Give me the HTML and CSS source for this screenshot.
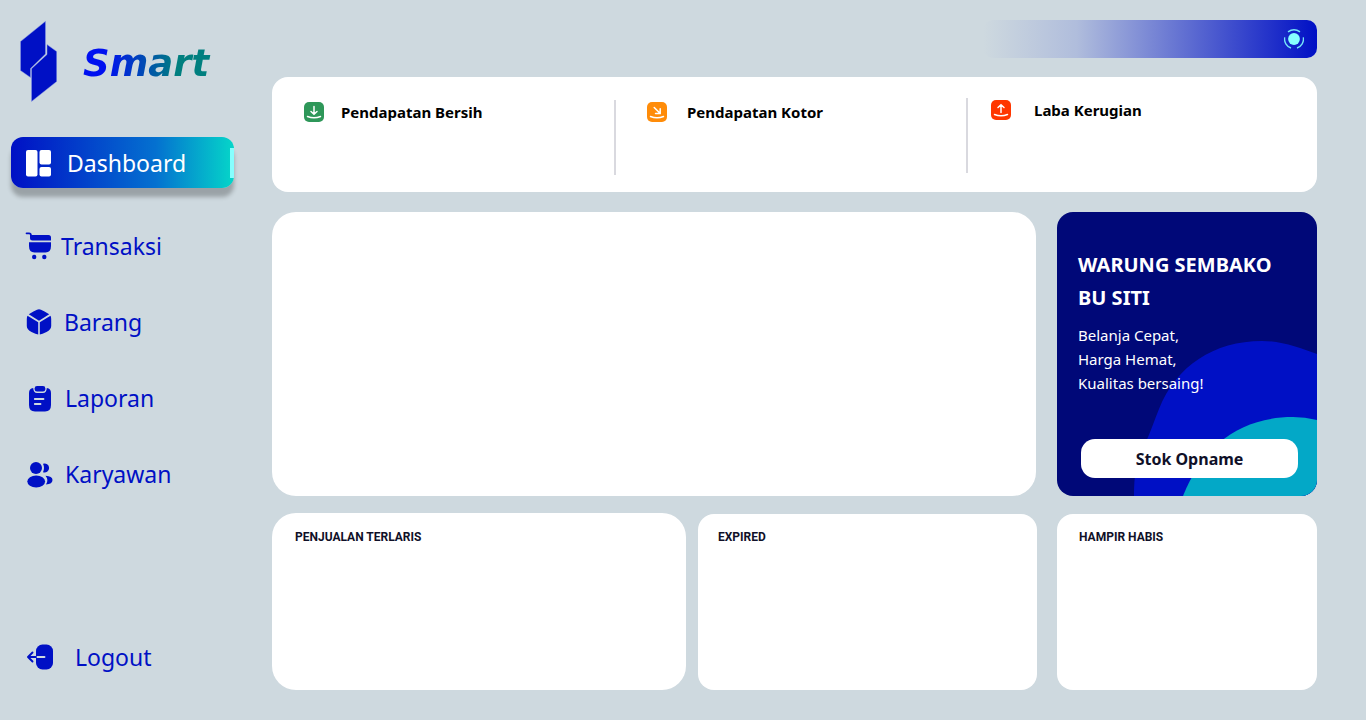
FILE: index.html
```html
<!DOCTYPE html>
<html lang="id">
<head>
<meta charset="utf-8">
<meta name="viewport" content="width=device-width, initial-scale=1">
<title>Smart</title>
<link rel="stylesheet" href="styles.css">
</head>
<body>
<div class="app">
  <aside class="sidebar">
    <div class="brand">
      <svg class="brand-mark" viewBox="0 0 37 82" aria-hidden="true">
        <g fill="#0010c5" stroke="#8f9fe6" stroke-width=".5">
          <path d="M.5 21.500 25.500 1.300V34L10.500 48.500V57.500L.5 50.500Z"/>
          <path d="M27 24.500 36.700 31.500V61.500L11.500 81.500V48.700L27 34.500Z"/>
        </g>
      </svg>
      <span class="brand-name">Smart</span>
    </div>
    <nav class="nav">
      <a class="nav-item active" href="#dashboard">
        <svg class="nav-icon" viewBox="0 0 26 28" aria-hidden="true"><g fill="#fff"><rect x="0" y="1" width="11.500" height="26.500" rx="2"/><rect x="13.500" y="1" width="11.500" height="14.500" rx="2"/><rect x="13.500" y="18" width="11.500" height="9.500" rx="2"/></g></svg>
        <span>Dashboard</span>
      </a>
      <a class="nav-item cart" href="#transaksi">
        <svg class="nav-icon" viewBox="0 0 26 28" aria-hidden="true"><path d="M.5 1.300H3Q5 1.300 5 3.500V5" fill="none" stroke="currentColor" stroke-width="1.700" stroke-linecap="round"/><path d="M4 3H22.500Q25 3 25 5.500V8.500H6.500Q4 8.500 4 6ZM3 10.200H25V14Q25 20.500 19.500 20.500H8.500Q3 20.500 3 14Z" fill="currentColor"/><circle cx="8.200" cy="25" r="2.200" fill="currentColor"/><circle cx="18.300" cy="25" r="2.200" fill="currentColor"/></svg>
        <span>Transaksi</span>
      </a>
      <a class="nav-item box" href="#barang">
        <svg class="nav-icon" viewBox="0 0 26 28" aria-hidden="true"><path d="M2.800 6.200Q8 3 11 1.700Q13 .9 15 1.700Q18 3 23.200 6.200L13 12.800ZM1.500 7.800 12.200 14.200V26.500Q10 26.300 5.500 24Q.8 21.500.8 18V11Q.8 9 1.500 7.800ZM24.500 7.800 13.800 14.200V26.500Q16 26.300 20.500 24Q25.200 21.500 25.200 18V11Q25.200 9 24.500 7.800Z" fill="currentColor"/></svg>
        <span>Barang</span>
      </a>
      <a class="nav-item" href="#laporan">
        <svg class="nav-icon" viewBox="0 0 26 28" aria-hidden="true"><path d="M7.200 4Q3 4.500 3 9V21Q3 27.500 9 27.500H19Q25 27.500 25 21V9Q25 4.500 20.800 4Q20.500 9 17 9H11Q7.500 9 7.200 4Z" fill="currentColor"/><rect x="8.700" y="2" width="10.600" height="5.500" rx="2.300" fill="currentColor"/><path d="M8.800 15H17.500M8.800 20H14.500" stroke="#ced9df" stroke-width="1.800" stroke-linecap="round"/></svg>
        <span>Laporan</span>
      </a>
      <a class="nav-item" href="#karyawan">
        <svg class="nav-icon" viewBox="0 0 26 28" aria-hidden="true"><g fill="currentColor"><circle cx="10" cy="8" r="6"/><ellipse cx="10.200" cy="21.500" rx="8.900" ry="5.900"/><path d="M17 3.800A4.500 4.500 0 1 1 17 12.200Q19 8 17 3.800ZM19.500 15.800Q26.500 16.200 26.500 20Q26.500 24 20 24.500Q23 20 19.500 15.800Z"/></g></svg>
        <span>Karyawan</span>
      </a>
    </nav>
    <a class="nav-item logout" href="#logout">
      <svg class="nav-icon" viewBox="0 0 26 28" aria-hidden="true"><rect x="10" y="1.500" width="17" height="25" rx="6.500" fill="currentColor"/><path d="M18.500 14H10" stroke="#ced9df" stroke-width="1.900" stroke-linecap="round"/><path d="M10 14H2.500M6.500 9.500 2 14 6.500 18.500" fill="none" stroke="currentColor" stroke-width="1.900" stroke-linecap="round" stroke-linejoin="round"/></svg>
      <span>Logout</span>
    </a>
  </aside>

  <main class="main">
    <header class="topbar">
      <button class="status" type="button" aria-label="Status">
        <svg viewBox="0 0 20 20" aria-hidden="true"><circle cx="10" cy="10" r="5.900" fill="#87ffff"/><path d="M4 2.800Q10-1.200 16 2.800M.7 8.300A9.400 9.400 0 0 0 7 19M19.300 8.300A9.400 9.400 0 0 1 13 19" fill="none" stroke="#75e5f8" stroke-width="1.400"/></svg>
      </button>
    </header>

    <section class="card summary">
      <div class="metric">
        <svg class="metric-icon" viewBox="0 0 20 20" aria-hidden="true"><rect width="20" height="20" rx="5" fill="#2e9759"/><path d="M10 4.500V12M7 9.500 10 12.300 13 9.500M3.500 14.500Q10 17 16.500 14.500" class="arrow"/></svg>
        <h2>Pendapatan Bersih</h2>
      </div>
      <div class="metric gross">
        <svg class="metric-icon" viewBox="0 0 20 20" aria-hidden="true"><rect width="20" height="20" rx="5" fill="#ff8c09"/><path d="M7.200 5.500 13 11.300M8.500 11.500H13.200V6.800M3.500 14.500Q10 17 16.500 14.500" class="arrow"/></svg>
        <h2>Pendapatan Kotor</h2>
      </div>
      <div class="metric loss">
        <svg class="metric-icon" viewBox="0 0 20 20" aria-hidden="true"><rect width="20" height="20" rx="5" fill="#ff3700"/><path d="M10 12.500V5M7 7.500 10 4.700 13 7.500M3.500 14.500Q10 17 16.500 14.500" class="arrow"/></svg>
        <h2>Laba Kerugian</h2>
      </div>
    </section>

    <div class="row hero">
      <section class="card large" aria-label="Grafik"></section>
      <section class="promo">
        <svg class="promo-art" viewBox="0 0 260 284" preserveAspectRatio="xMaxYMax slice" aria-hidden="true"><path d="M77 284C77 265 79 246 88 232C94 219 97 209 102 197C119 154 157 129 205 129C225 129 243 136 260 142V284Z" fill="#0010c5"/><path d="M126 284C146 233 184 205 236 205Q248 205 260 208V284Z" fill="#03a8c7"/></svg>
        <div class="promo-body">
          <h1>WARUNG SEMBAKO<br>BU SITI</h1>
          <p>Belanja Cepat,<br>Harga Hemat,<br>Kualitas bersaing!</p>
          <button class="stock" type="button">Stok Opname</button>
        </div>
      </section>
    </div>

    <div class="row lists">
      <section class="card large list best"><h3>PENJUALAN TERLARIS</h3></section>
      <section class="card list expired"><h3>EXPIRED</h3></section>
      <section class="card list low"><h3>HAMPIR HABIS</h3></section>
    </div>
  </main>
</div>
</body>
</html>
```
FILE: styles.css
```css
* { box-sizing: border-box; }

body {
  margin: 0;
  background: #ced9df;
  color: #000;
  font-family: "Noto Sans", "Open Sans", sans-serif;
}

h1, h2, h3, p { margin: 0; }
button { border: 0; padding: 0; font: inherit; cursor: pointer; }
svg { display: block; flex: none; }

.app { display: flex; min-height: 100vh; }

.sidebar {
  display: flex;
  flex: none;
  flex-direction: column;
  width: 272px;
  padding: 20px 38px 37px 11px;
}

.brand { display: flex; align-items: center; gap: 26px; padding-left: 9px; }
.brand-mark { width: 37px; height: 82px; }
.brand-name {
  padding: 6px 4px 0 0;
  background: linear-gradient(90deg, #0010f0 18%, #007f7f 72%);
  background-clip: text;
  color: transparent;
  font-family: "DejaVu Sans", "Noto Sans", sans-serif;
  font-size: 37px;
  font-style: italic;
  font-weight: 700;
  line-height: 60px;
}

.nav { display: flex; flex-direction: column; gap: 24px; margin-top: 35px; }
.nav-item {
  display: flex;
  align-items: center;
  gap: 13px;
  height: 52px;
  padding-left: 15px;
  color: #0010c5;
  font-size: 23px;
  line-height: 36px;
  text-decoration: none;
}
.nav-icon { width: 26px; height: 28px; overflow: visible; }
.nav-item.active {
  gap: 15px;
  height: 51px;
  margin-bottom: 8px;
  border-radius: 12px;
  background:
    linear-gradient(#87ffff, #87ffff) right center / 4px 30px no-repeat,
    linear-gradient(90deg, #0010c5, #0471d0 65%, #05d6c9);
  box-shadow: 0 9px 4px #00000040;
  color: #fff;
}
.nav-item.cart { gap: 9px; }
.nav-item.box { gap: 12px; }
.nav-item.logout { gap: 23px; margin-top: auto; }

.main {
  display: flex;
  flex: 1;
  flex-direction: column;
  min-width: 0;
  padding: 20px 49px 30px 0;
}

.topbar {
  display: flex;
  align-items: center;
  justify-content: flex-end;
  align-self: flex-end;
  width: 32%;
  height: 38px;
  margin-bottom: 19px;
  padding-right: 13px;
  border-radius: 10px;
  background: linear-gradient(90deg, #ced9df, #b0bddc 28%, #0010c5);
}
.status { width: 20px; height: 20px; background: none; }

.card { border-radius: 16px; background: #fff; }
.large { border-radius: 24px; }

.summary {
  display: grid;
  grid-template-columns: 342fr 352fr 351fr;
  height: 115px;
  margin-bottom: 20px;
  padding-top: 23px;
}
.metric {
  display: flex;
  align-items: flex-start;
  gap: 17px;
  height: 75px;
  padding-left: 32px;
}
.metric + .metric { border-left: 2px solid #d9d9df; padding-left: 31px; }
.metric.gross { gap: 20px; }
.metric + .metric.loss { gap: 23px; margin-top: -2px; padding-left: 23px; }
.metric-icon { width: 20px; height: 20px; margin-top: 2px; }
.arrow { fill: none; stroke: #fff; stroke-width: 1.5; stroke-linecap: round; }
h2 { font-size: 15px; font-weight: 700; line-height: 24px; }

.row { display: grid; }
.hero { grid-template-columns: 1fr 260px; gap: 21px; min-height: 284px; margin-bottom: 17px; }

.promo {
  position: relative;
  overflow: hidden;
  border-radius: 16px;
  background: #000878;
  color: #fff;
}
.promo-art { position: absolute; inset: 0; width: 100%; height: 100%; }
.promo-body {
  position: relative;
  display: flex;
  flex-direction: column;
  height: 100%;
  padding: 36px 19px 18px 21px;
}
h1 { font-size: 20px; font-weight: 700; line-height: 33px; white-space: nowrap; }
.promo p { margin-top: 9px; font-size: 15px; line-height: 24px; }
.stock {
  height: 39px;
  margin: auto 0 0 3px;
  border-radius: 14px;
  background: #fff;
  color: #101028;
  font-size: 16px;
  font-weight: 700;
}

.lists { flex: 1; grid-template-columns: 414fr 351fr 280px; min-height: 177px; }
.list { padding-top: 14px; }
.best { padding-top: 15px; padding-left: 23px; }
.expired { margin: 1px 0 0 12px; padding-left: 20px; }
.low { margin: 1px 0 0 20px; padding-left: 22px; }
h3 {
  color: #101028;
  font-family: Roboto, "Noto Sans", sans-serif;
  font-size: 12px;
  font-weight: 700;
  line-height: 18px;
}
```
